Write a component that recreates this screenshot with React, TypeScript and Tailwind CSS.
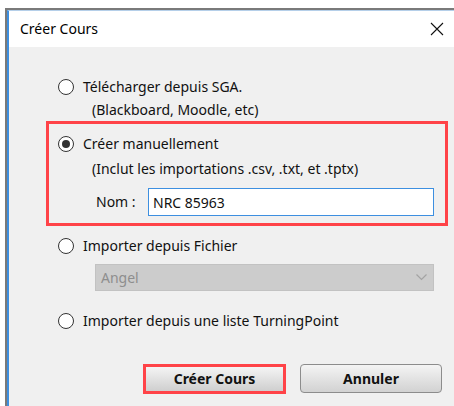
import { useState } from "react";

const font = { fontFamily: '"Noto Sans", "Open Sans", sans-serif' };

function Radio({ checked, onClick }: { checked?: boolean; onClick?: () => void }) {
  return (
    <span
      onClick={onClick}
      className="w-[16px] h-[16px] rounded-full border border-[#333] bg-white flex items-center justify-center shrink-0"
    >
      {checked && <span className="w-[8px] h-[8px] rounded-full bg-[#333]" />}
    </span>
  );
}

export default function App() {
  const [choice, setChoice] = useState("manual");
  const [name, setName] = useState("NRC 85963");

  return (
    <div className="w-[454px] h-[406px] bg-white overflow-hidden flex flex-col text-[14px] leading-[18px] text-[#111]" style={font}>
      {/* window frame */}
      <div className="flex-1 ml-[5px] mt-[8px] border-t-2 border-l-2 border-[#7a7a7a] flex flex-col">
        <div className="flex-1 border-l-2 border-t border-l-[#3d8fe0] border-t-[#b5cfe9] flex flex-col">
          {/* title bar */}
          <div className="h-[36px] bg-white flex items-center justify-between pl-[11px] pr-[9px] shrink-0">
            <span className="text-black">Créer Cours</span>
            <svg width="14" height="14" viewBox="0 0 14 14" className="mr-[1px]">
              <path d="M1 1 L13 13 M13 1 L1 13" stroke="#111" strokeWidth="1.1" />
            </svg>
          </div>

          {/* body */}
          <div className="flex-1 bg-[#f0f0f0] pl-[37px] pr-[6px] pt-[31px] flex flex-col">
            <div className="pl-[12px]">
              <label className="flex items-center gap-[9px] h-[18px]" onClick={() => setChoice("lms")}>
                <Radio checked={choice === "lms"} />
                <span>Télécharger depuis SGA.</span>
              </label>
              <div className="pl-[34px] h-[18px] mt-[5px] flex items-center">(Blackboard, Moodle, etc)</div>
            </div>

            {/* highlighted option */}
            <div className="mt-[2px] border-[3px] border-[#ff4348] pl-[9px] pr-[11px] pt-[11px] pb-[7px]">
              <label className="flex items-center gap-[9px] h-[18px]" onClick={() => setChoice("manual")}>
                <Radio checked={choice === "manual"} />
                <span>Créer manuellement</span>
              </label>
              <div className="pl-[34px] h-[18px] mt-[7px] flex items-center">(Inclut les importations .csv, .txt, et .tptx)</div>
              <div className="flex items-center mt-[10px] pl-[38px]">
                <span className="w-[52px]">Nom :</span>
                <input
                  value={name}
                  onChange={e => setName(e.target.value)}
                  className="flex-1 h-[28px] border border-[#3d8fe0] bg-white px-[4px] outline-none text-[14px] text-[#111]"
                  style={font}
                />
              </div>
            </div>

            <div className="pl-[12px] mt-[11px]">
              <label className="flex items-center gap-[9px] h-[18px]" onClick={() => setChoice("file")}>
                <Radio checked={choice === "file"} />
                <span>Importer depuis Fichier</span>
              </label>
              <div className="ml-[37px] mr-[14px] mt-[9px] h-[27px] bg-[#cccccc] border border-[#c2c2c2] flex items-center justify-between pl-[5px] pr-[6px] text-[#8e8e8e]">
                <span>Angel</span>
                <svg width="11" height="7" viewBox="0 0 11 7">
                  <path d="M0.5 0.5 L5.5 5.5 L10.5 0.5" fill="none" stroke="#a3a3a3" strokeWidth="1.2" />
                </svg>
              </div>
              <label className="flex items-center gap-[9px] h-[18px] mt-[21px]" onClick={() => setChoice("tp")}>
                <Radio checked={choice === "tp"} />
                <span>Importer depuis une liste TurningPoint</span>
              </label>
            </div>

            {/* actions */}
            <div className="flex justify-end gap-[14px] mt-[34px] pr-[6px]">
              <div className="border-[3px] border-[#ff4348]">
                <button className="w-[137px] h-[24px] font-bold text-[14px] bg-gradient-to-b from-[#f4f4f4] to-[#cfcfcf] text-[#111]" style={font}>
                  Créer Cours
                </button>
              </div>
              <button className="w-[142px] h-[29px] rounded-[4px] border border-[#8c8c8c] font-bold text-[14px] bg-gradient-to-b from-[#f4f4f4] to-[#d2d2d2] text-[#111]" style={font}>
                Annuler
              </button>
            </div>
          </div>
        </div>
      </div>
    </div>
  );
}
